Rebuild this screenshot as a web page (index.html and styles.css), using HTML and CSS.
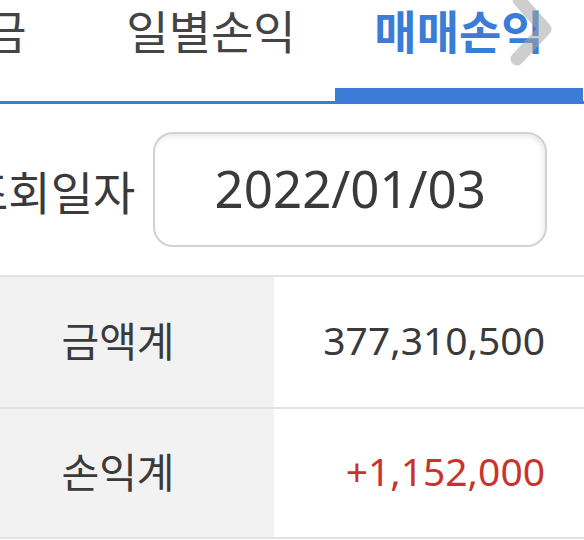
FILE: index.html
```html
<!DOCTYPE html>
<html lang="ko">
<head>
<meta charset="utf-8">
<title>매매손익</title>
<link rel="stylesheet" href="styles.css">
</head>
<body>
<div class="page">
  <nav class="tabs">
    <div class="tab-strip">
      <div class="tab">예수금</div>
      <div class="tab">일별손익</div>
      <div class="tab active">매매손익</div>
    </div>
    <svg class="scroll-arrow" width="60" height="80" viewBox="0 0 60 80" aria-hidden="true">
      <path d="M20 8 L46 37 L18 67" fill="none" stroke="rgba(165,165,165,0.55)" stroke-width="13" stroke-linecap="round" stroke-linejoin="round"/>
    </svg>
  </nav>

  <section class="date-row">
    <span class="date-label">조회일자</span>
    <div class="date-box">2022/01/03</div>
  </section>

  <section class="summary">
    <div class="cell label">금액계</div>
    <div class="cell value">377,310,500</div>
    <div class="cell label">손익계</div>
    <div class="cell value plus">+1,152,000</div>
  </section>
</div>
</body>
</html>
```

FILE: styles.css
```css
html, body {
  margin: 0;
  padding: 0;
  background: #ffffff;
}

body {
  font-family: "Noto Sans", "Noto Sans CJK KR", sans-serif;
  color: #3a3a3a;
  width: 584px;
  overflow: hidden;
}

.page {
  width: 584px;
}

/* Tabs */
.tabs {
  position: relative;
  height: 101px;
  border-bottom: 3px solid #3b7dd6;
  overflow: hidden;
}

.tab-strip {
  display: flex;
  margin-left: -161px;
  height: 101px;
}

.tab {
  flex: 0 0 248px;
  text-align: center;
  font-family: "Noto Sans CJK KR", sans-serif;
  font-size: 46px;
  line-height: 58px;
  color: #444444;
  height: 101px;
  box-sizing: border-box;
}

.tab.active {
  color: #3b7dd6;
  font-weight: 700;
  box-shadow: inset 0 -13px 0 #3b7dd6;
}

.scroll-arrow {
  position: absolute;
  left: 499px;
  top: -8px;
}

/* Date row */
.date-row {
  display: flex;
  align-items: center;
  box-sizing: border-box;
  height: 173px;
  border-bottom: 2px solid #e2e2e2;
}

.date-label {
  font-family: "Noto Sans CJK KR", sans-serif;
  font-size: 46px;
  color: #3a3a3a;
  margin-left: -34px;
  margin-right: 18px;
  white-space: nowrap;
}

.date-box {
  width: 394px;
  height: 115px;
  box-sizing: border-box;
  border: 2px solid #d2d2d2;
  border-radius: 20px;
  box-shadow: inset -2px 3px 4px rgba(0, 0, 0, 0.08);
  display: flex;
  align-items: center;
  justify-content: center;
  font-size: 51px;
  color: #3a3a3a;
  padding-bottom: 4px;
}

/* Summary table */
.summary {
  display: grid;
  grid-template-columns: 274px 1fr;
  grid-auto-rows: 130px;
  border-bottom: 2px solid #e2e2e2;
}

.cell {
  display: flex;
  align-items: center;
  font-size: 39px;
  padding-bottom: 6px;
}

.cell:nth-child(n+3) {
  border-top: 2px solid #e2e2e2;
}

.label {
  background: #f2f2f2;
  justify-content: center;
  padding-right: 38px;
  font-family: "Noto Sans CJK KR", sans-serif;
  font-size: 41px;
  color: #3a3a3a;
}

.value {
  justify-content: flex-end;
  padding-right: 39px;
  color: #3a3a3a;
}

.value.plus {
  color: #c8342c;
}
```
